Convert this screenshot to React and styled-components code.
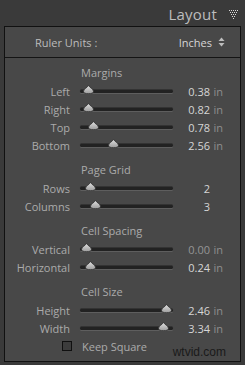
import React from 'react';
import styled, { createGlobalStyle } from 'styled-components';

const SECTIONS = [
  {
    title: 'Margins',
    rows: [
      { label: 'Left', pos: 8, value: '0.38', unit: 'in' },
      { label: 'Right', pos: 8, value: '0.82', unit: 'in' },
      { label: 'Top', pos: 13, value: '0.78', unit: 'in' },
      { label: 'Bottom', pos: 33, value: '2.56', unit: 'in' },
    ],
  },
  {
    title: 'Page Grid',
    rows: [
      { label: 'Rows', pos: 10, value: '2' },
      { label: 'Columns', pos: 15, value: '3' },
    ],
  },
  {
    title: 'Cell Spacing',
    rows: [
      { label: 'Vertical', pos: 6, value: '0.00', unit: 'in', dim: true },
      { label: 'Horizontal', pos: 10, value: '0.24', unit: 'in' },
    ],
  },
  {
    title: 'Cell Size',
    rows: [
      { label: 'Height', pos: 86, value: '2.46', unit: 'in' },
      { label: 'Width', pos: 83, value: '3.34', unit: 'in' },
    ],
  },
];

const Layout = () => {
  return (
    <>
      <GlobalStyle />
      <Page>
        <Header>
          <Title>Layout</Title>
          <DotTriangle />
        </Header>
        <Panel>
          <RulerRow>
            <RulerLabel>Ruler Units :</RulerLabel>
            <Select>
              Inches
              <UpDown />
            </Select>
          </RulerRow>
          <Body>
            {SECTIONS.map(section => (
              <Section key={section.title}>
                <Heading>{section.title}</Heading>
                {section.rows.map(row => (
                  <Row key={row.label}>
                    <Label>{row.label}</Label>
                    <Track>
                      <Thumb style={{ left: row.pos - 5 }}>
                        <ThumbShape />
                      </Thumb>
                    </Track>
                    <Value dim={row.dim}>
                      {row.value}
                      <Unit>{row.unit}</Unit>
                    </Value>
                  </Row>
                ))}
              </Section>
            ))}
            <CheckRow>
              <Box />
              <CheckText>Keep Square</CheckText>
            </CheckRow>
          </Body>
          <Watermark>wtvid.com</Watermark>
        </Panel>
      </Page>
    </>
  );
};

export default Layout;

const DotTriangle = () => (
  <svg width="12" height="10" viewBox="0 0 12 10">
    {[0, 1, 2, 3, 4].map(r =>
      Array.from({ length: 5 - r }).map((_, i) => (
        <rect
          key={`${r}-${i}`}
          x={1 + r + i * 2}
          y={1 + r * 2}
          width="1"
          height="1"
          fill="#d8d8d8"
        />
      ))
    )}
  </svg>
);

const UpDown = () => (
  <svg width="7" height="10" viewBox="0 0 7 10" style={{ marginLeft: 6 }}>
    <path d="M3.5 0.5 L6.5 4 L0.5 4 Z" fill="#bdbdbd" />
    <path d="M3.5 9.5 L6.5 6 L0.5 6 Z" fill="#bdbdbd" />
  </svg>
);

const ThumbShape = () => (
  <svg width="11" height="9" viewBox="0 0 11 9">
    <defs>
      <linearGradient id="tg" x1="0" y1="0" x2="0" y2="1">
        <stop offset="0" stopColor="#e2e2e2" />
        <stop offset="1" stopColor="#9c9c9c" />
      </linearGradient>
    </defs>
    <path
      d="M5.5 0.3 C6.3 2.6 10.5 3.8 10.5 6.4 C10.5 8 8.7 8.7 5.5 8.7 C2.3 8.7 0.5 8 0.5 6.4 C0.5 3.8 4.7 2.6 5.5 0.3 Z"
      fill="url(#tg)"
      stroke="#2b2b2b"
      strokeWidth="0.8"
    />
  </svg>
);

const GlobalStyle = createGlobalStyle`
  body {
    margin: 0;
    background: #3a3a3a;
    font-family: 'Open Sans', 'Liberation Sans', sans-serif;
  }
`;

const Page = styled.div`
  width: 245px;
  height: 365px;
  background: #3a3a3a;
  padding-top: 1px;
  box-sizing: border-box;
`;

const Header = styled.div`
  display: flex;
  justify-content: flex-end;
  align-items: center;
  height: 25px;
  padding-right: 5px;
  gap: 11px;
`;

const Title = styled.div`
  color: #bdbdbd;
  font-size: 15px;
  letter-spacing: 0.2px;
`;

const Panel = styled.div`
  position: relative;
  margin: 0 4px;
  height: 336px;
  border: 1px solid #111;
  background: #484848;
  box-sizing: border-box;
`;

const RulerRow = styled.div`
  display: flex;
  justify-content: space-between;
  align-items: center;
  height: 31px;
  padding: 0 15px 0 30px;
  border-bottom: 1px solid #141414;
  box-sizing: border-box;
`;

const RulerLabel = styled.div`
  color: #bcbcbc;
  font-size: 11px;
`;

const Select = styled.div`
  display: flex;
  align-items: center;
  color: #d6d6d6;
  font-size: 11px;
`;

const Body = styled.div`
  padding-top: 6px;
`;

const Section = styled.div`
  & + & {
    margin-top: 7px;
  }
`;

const Heading = styled.div`
  height: 18px;
  line-height: 18px;
  padding-left: 76px;
  color: #ababab;
  font-size: 11px;
`;

const Row = styled.div`
  display: flex;
  align-items: center;
  height: 18px;
`;

const Label = styled.div`
  width: 65px;
  margin-right: 10px;
  text-align: right;
  color: #ababab;
  font-size: 11px;
`;

const Track = styled.div`
  position: relative;
  width: 93px;
  height: 3px;
  border-radius: 2px;
  background: #222;
  box-shadow: 0 1px 0 #5e5e5e, 0 -1px 0 #333;
`;

const Thumb = styled.div`
  position: absolute;
  top: -5px;
  display: flex;
  line-height: 0;
`;

const Value = styled.div`
  width: 50px;
  display: flex;
  justify-content: flex-end;
  color: ${p => (p.dim ? '#959595' : '#d6d6d6')};
  font-size: 11px;
`;

const Unit = styled.span`
  width: 13px;
  text-align: right;
  color: #8e8e8e;
`;

const CheckRow = styled.div`
  display: flex;
  align-items: center;
  height: 18px;
  padding-left: 57px;
  gap: 10px;
`;

const Box = styled.div`
  width: 8px;
  height: 8px;
  border: 1px solid #101010;
  background: #3c3c3c;
`;

const CheckText = styled.div`
  color: #ababab;
  font-size: 11px;
`;

const Watermark = styled.div`
  position: absolute;
  right: 14px;
  bottom: 2px;
  color: #1a1a1a;
  font-family: 'Liberation Sans', Arial, sans-serif;
  font-size: 12px;
`;
